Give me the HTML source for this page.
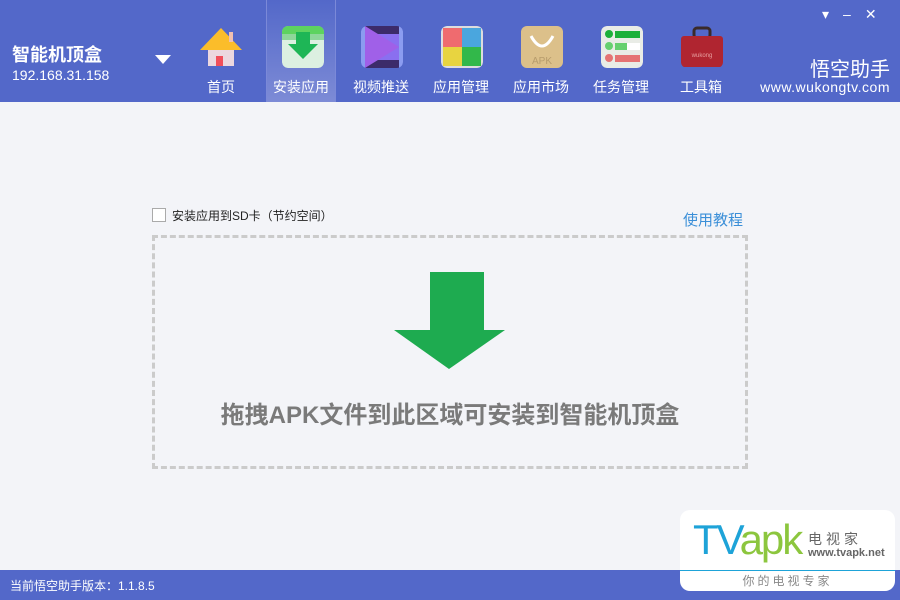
<!DOCTYPE html>
<html><head><meta charset="utf-8"><style>
*{margin:0;padding:0;box-sizing:border-box}
body{width:900px;height:600px;overflow:hidden;position:relative;background:#f3f4f8;font-family:"Liberation Sans","Noto Sans CJK SC",sans-serif}
.hd{position:absolute;left:0;top:0;width:900px;height:102px;background:#5368c9}
.t1{position:absolute;left:12px;top:41px;color:#fff;font-size:18px;font-weight:bold}
.t2{position:absolute;left:12px;top:67px;color:#fff;font-size:14px}
.nav{position:absolute;top:0;height:102px;width:70px;text-align:center;color:#fff;font-size:14px}
.nav .ic{position:absolute;left:15px;top:26px;width:42px;height:42px;border-radius:6px}
.nav span{position:absolute;left:0;width:100%;top:77px}
.sel{background:linear-gradient(#5368c9,#7d8bd6);border-left:1px solid #7b89d8;border-right:1px solid #7b89d8}
.ft{position:absolute;left:0;top:570px;width:900px;height:30px;background:#5368c9;color:#fff;font-size:12px;padding:7px 10px}
.box{position:absolute;left:152px;top:235px;width:596px;height:234px;border:3px dashed #cbcbcb}
</style></head><body>
<div class="hd"></div>
<div class="t1">智能机顶盒</div>
<div class="t2">192.168.31.158</div>
<svg style="position:absolute;left:155px;top:55px" width="16" height="10"><polygon points="0,0 16,0 8,9" fill="#fff"/></svg>
<div class="nav" style="left:186px"><svg class="ic" style="left:14px" viewBox="0 0 42 42"><rect x="8" y="20" width="26" height="20" fill="#ecd8df"/><polygon points="21,2 42,24 0,24" fill="#fbbd2a"/><rect x="16" y="30" width="7" height="10" fill="#f14f5b"/><rect x="29" y="6" width="4" height="10" fill="#f0c0b0"/></svg><span>首页</span></div>
<div class="nav sel" style="left:266px"><svg class="ic" viewBox="0 0 42 42"><rect width="42" height="42" rx="6" fill="#dcf0e1"/><rect width="42" height="14" fill="#5dd35f"/><rect y="8" width="42" height="6" fill="#8ed79a"/><polygon points="14,6 28,6 28,18 36,18 21,33 6,18 14,18" fill="#1eb656"/></svg><span>安装应用</span></div>
<div class="nav" style="left:346px"><svg class="ic" viewBox="0 0 42 42"><rect width="42" height="42" rx="6" fill="#8b9cf0"/><rect x="4" width="34" height="42" fill="#3c2b6a"/><rect x="4" y="8" width="34" height="26" fill="#8a6ff0"/><polygon points="4,0 38,21 4,42" fill="#a060e8"/></svg><span>视频推送</span></div>
<div class="nav" style="left:426px"><svg class="ic" viewBox="0 0 42 42"><rect width="42" height="42" rx="6" fill="#ddd"/><rect x="2" y="2" width="19" height="19" fill="#ef6b6f"/><rect x="21" y="2" width="19" height="19" fill="#4aa6de"/><rect x="2" y="21" width="19" height="19" fill="#e8d440"/><rect x="21" y="21" width="19" height="19" fill="#32b84a"/></svg><span>应用管理</span></div>
<div class="nav" style="left:506px"><svg class="ic" viewBox="0 0 42 42"><rect width="42" height="42" rx="3" fill="#dcc08a"/><path d="M10 10 Q21 30 32 10" stroke="#fff" stroke-width="3" fill="none"/><text x="21" y="38" font-size="10" fill="#b79c6c" text-anchor="middle" font-family="Liberation Sans">APK</text></svg><span>应用市场</span></div>
<div class="nav" style="left:586px"><svg class="ic" viewBox="0 0 42 42"><rect width="42" height="42" rx="6" fill="#e9ece6"/><circle cx="8" cy="8" r="4" fill="#1cb03a"/><rect x="14" y="5" width="25" height="7" fill="#1cb03a"/><circle cx="8" cy="20" r="4" fill="#66d06f"/><rect x="14" y="17" width="12" height="7" fill="#66d06f"/><rect x="26" y="17" width="13" height="7" fill="#fff"/><circle cx="8" cy="32" r="4" fill="#e57373"/><rect x="14" y="29" width="25" height="7" fill="#e57373"/></svg><span>任务管理</span></div>
<div class="nav" style="left:666px"><svg class="ic" viewBox="0 0 42 42"><rect x="13" y="2" width="16" height="10" rx="3" stroke="#3a2a2a" stroke-width="3" fill="none"/><rect y="10" width="42" height="31" rx="3" fill="#b02530"/><text x="21" y="31" font-size="6" fill="#e8a0a0" text-anchor="middle" font-family="Liberation Sans">wukong</text></svg><span>工具箱</span></div>
<div style="position:absolute;left:822px;top:6px;color:#fff;font-size:14px;letter-spacing:14px">▾–✕</div>
<div style="position:absolute;right:10px;top:53px;color:#fff;font-size:20px">悟空助手</div>
<div style="position:absolute;right:10px;top:79px;color:#fff;font-size:14px;letter-spacing:0.5px">www.wukongtv.com</div>
<div style="position:absolute;left:152px;top:208px;width:14px;height:14px;border:1px solid #aaa;background:#fff"></div>
<div style="position:absolute;left:172px;top:207px;font-size:12px;color:#222">安装应用到SD卡（节约空间）</div>
<div style="position:absolute;left:683px;top:209px;font-size:15px;color:#3b8fd8">使用教程</div>
<div class="box"></div>
<svg style="position:absolute;left:394px;top:272px" width="111" height="97"><polygon points="36,0 90,0 90,58 111,58 55,97 0,58 36,58" fill="#1eab50"/></svg>
<div style="position:absolute;left:152px;top:395px;width:596px;text-align:center;font-size:24px;font-weight:bold;color:#7a7a7a">拖拽APK文件到此区域可安装到智能机顶盒</div>
<div class="ft">当前悟空助手版本：1.1.8.5</div>
<div style="position:absolute;left:680px;top:510px;width:215px;height:81px;background:#fff;border-radius:10px;overflow:hidden">
<div style="position:absolute;left:13px;top:6px;font-size:42px;line-height:48px;font-family:'Liberation Sans',sans-serif;letter-spacing:-2px"><span style="color:#1ea3d8">TV</span><span style="color:#8cc63e">apk</span></div>
<div style="position:absolute;left:128px;top:19px;font-size:14px;color:#666;letter-spacing:4px">电视家</div>
<div style="position:absolute;left:128px;top:37px;font-size:11px;color:#666;font-weight:bold">www.tvapk.net</div>
<div style="position:absolute;left:0;top:60px;width:215px;height:1px;background:#1ea3d8"></div>
<div style="position:absolute;left:0;top:62px;width:215px;text-align:center;font-size:12px;color:#888;letter-spacing:3px">你的电视专家</div>
</div>
</body></html>
